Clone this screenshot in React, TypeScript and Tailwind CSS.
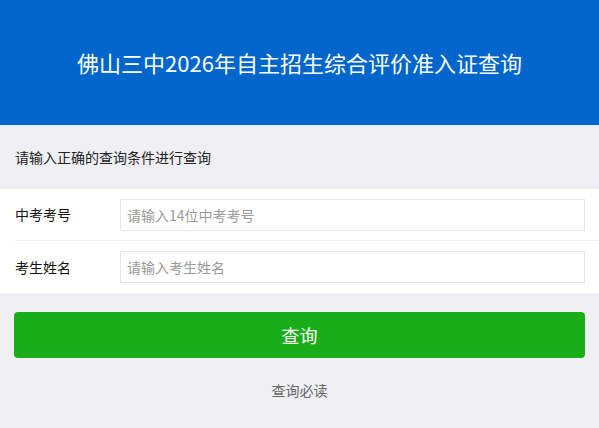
export default function App() {
  const font = { fontFamily: '"Noto Sans CJK SC", "Noto Sans", sans-serif' };
  return (
    <div className="min-h-[428px] w-full bg-[#efeff4]" style={font}>
      <div className="h-[125px] bg-[#0066cc] flex items-center justify-center pb-[2px]">
        <h1 className="text-[22px] text-white leading-none">佛山三中2026年自主招生综合评价准入证查询</h1>
      </div>

      <div className="h-[64px] flex items-center px-[15px] text-[14px] text-[#222]">
        请输入正确的查询条件进行查询
      </div>

      <div className="bg-white">
        <div className="flex items-center h-[52px] ml-[15px] border-b border-[#f0f0f0]">
          <label className="w-[105px] text-[14px] text-[#111]">中考考号</label>
          <input
            className="h-[32px] w-[465px] border border-[#e6e6e6] px-[6px] text-[14px] outline-none placeholder:text-[#999]"
            placeholder="请输入14位中考考号"
          />
        </div>
        <div className="flex items-center h-[52px] ml-[15px]">
          <label className="w-[105px] text-[14px] text-[#111]">考生姓名</label>
          <input
            className="h-[32px] w-[465px] border border-[#e6e6e6] px-[6px] text-[14px] outline-none placeholder:text-[#999]"
            placeholder="请输入考生姓名"
          />
        </div>
      </div>

      <div className="px-[14px] pt-[19px]">
        <button className="w-full h-[46px] rounded-[4px] bg-[#1aad19] text-white text-[18px]">查询</button>
      </div>

      <div className="text-center pt-[22px] text-[14px] text-[#666]">查询必读</div>
    </div>
  );
}
